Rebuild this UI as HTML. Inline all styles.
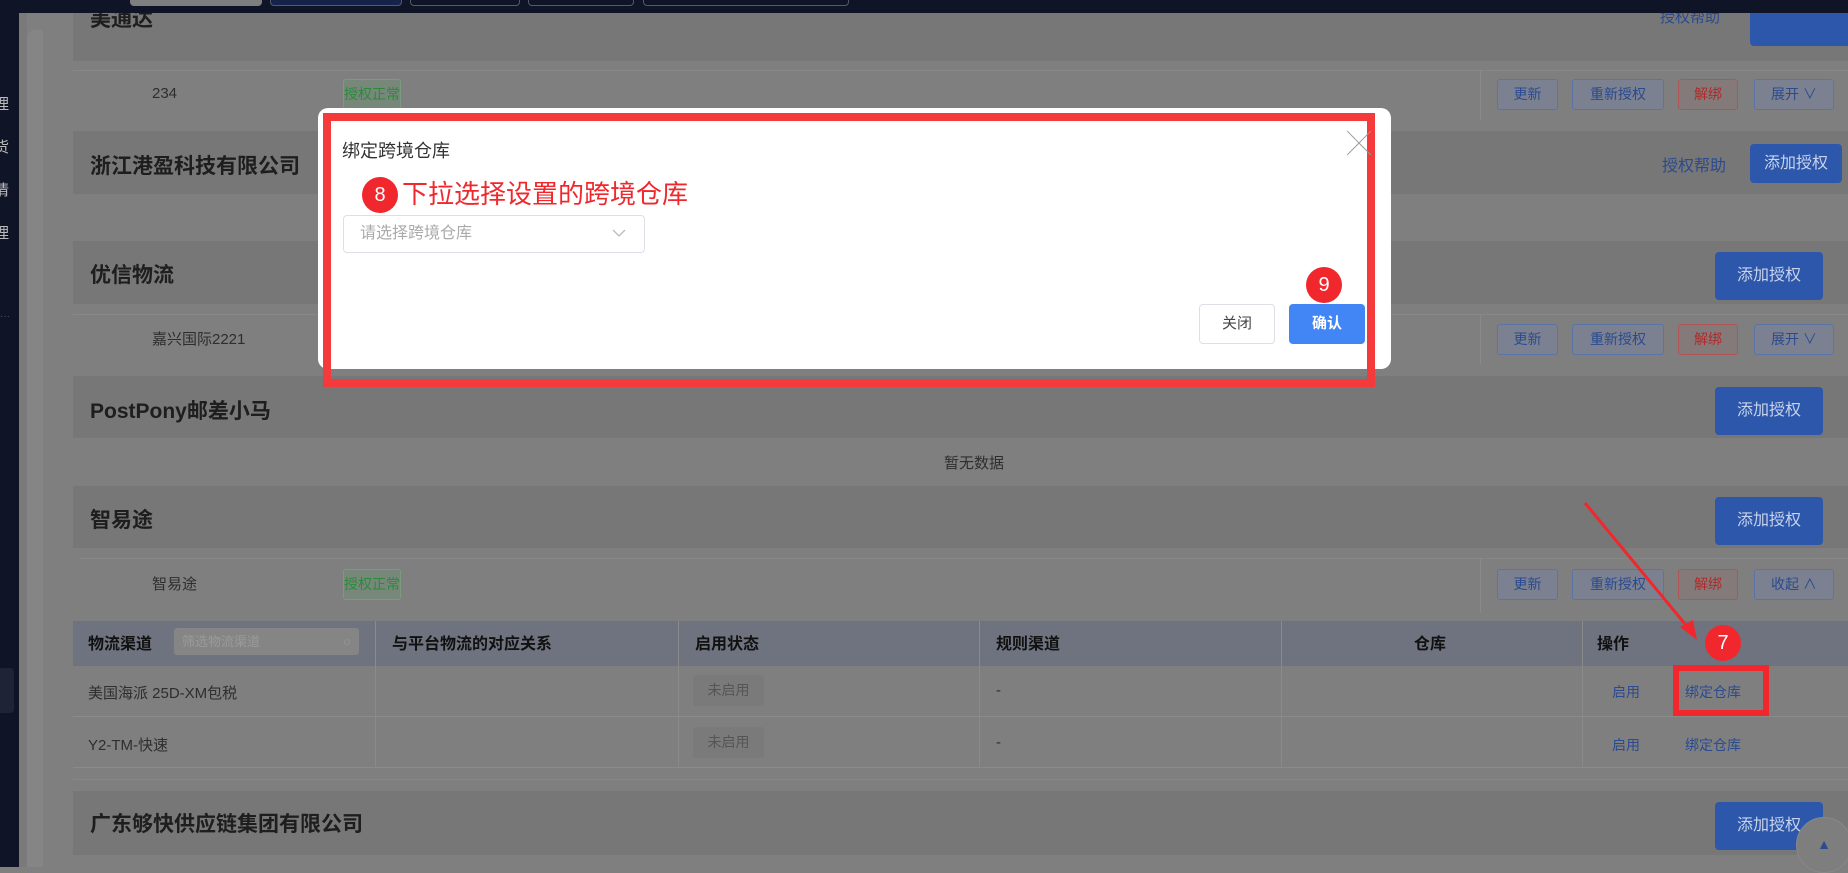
<!DOCTYPE html>
<html><head><meta charset="utf-8"><style>
*{margin:0;padding:0;box-sizing:border-box}
body{width:1848px;height:867px;overflow:hidden;background:#7f7f7f;font-family:"Liberation Sans","Noto Sans CJK SC",sans-serif;position:relative}
.a{position:absolute}
.hd{position:absolute;left:73px;width:1775px;background:#777}
.h{position:absolute;left:90px;font-size:21px;font-weight:bold;color:#1e1e1e}
.t{position:absolute;font-size:15px;color:#2e2e2e}
.ob{position:absolute;height:31px;border:1px solid #5a74a6;border-radius:3px;background:#7b8190;color:#2b4a8f;font-size:14px;text-align:center;line-height:29px}
.ob.r{border-color:#b05555;background:#857a7a;color:#b02a2a}
.bb{position:absolute;width:108px;height:48px;background:#2d57ab;border-radius:4px;color:#c8d3ec;font-size:16px;text-align:center;line-height:48px}
.tag{position:absolute;width:58px;height:31px;border:1px solid #7c9a80;background:#77887a;border-radius:3px;color:#2c8a3c;font-size:14px;text-align:center;line-height:29px}
.th{position:absolute;top:642px;font-size:16px;font-weight:bold;color:#111;transform:translateY(-50%)}
.vl{position:absolute;width:1px;background:#8a8a8a}
.circ{position:absolute;width:36px;height:36px;border-radius:50%;background:#f0282d;color:#fff;font-size:20px;text-align:center;line-height:36px}
</style></head><body>
<!-- sidebar -->
<div class="a" style="left:0;top:0;width:19px;height:867px;background:#0f1426"></div>
<div class="a" style="left:-6px;top:83px;color:#bbb;font-size:15px;line-height:43px">理<br>货<br>情<br>理</div>
<div class="a" style="left:0;top:311px;color:#555;font-size:10px">···</div>
<div class="a" style="left:0;top:668px;width:14px;height:45px;background:#1e2436;border-radius:0 4px 4px 0"></div>
<div class="a" style="left:19px;top:13px;width:8px;height:854px;background:#7a7a7a"></div>
<div class="a" style="left:27px;top:30px;width:16px;height:837px;background:#858585;border-radius:8px 0 0 0"></div>

<!-- sections -->
<div class="hd" style="top:13px;height:48px"></div>
<div class="h" style="top:3px">美通达</div>
<div class="a" style="left:1660px;top:6px;color:#2b4a8f;font-size:15px">授权帮助</div>
<div class="bb" style="left:1750px;top:0;height:46px"></div>
<div class="a" style="left:73px;top:70px;width:1775px;height:1px;background:#888"></div>
<div class="t" style="left:152px;top:85px">234</div>
<div class="tag" style="left:343px;top:79px">授权正常</div>
<div class="vl" style="left:1480px;top:70px;height:50px"></div>
<div class="ob" style="left:1497px;top:79px;width:61px">更新</div>
<div class="ob" style="left:1572px;top:79px;width:92px">重新授权</div>
<div class="ob r" style="left:1678px;top:79px;width:60px">解绑</div>
<div class="ob" style="left:1754px;top:79px;width:80px">展开 ∨</div>

<div class="hd" style="top:131px;height:63px"></div>
<div class="h" style="top:150px">浙江港盈科技有限公司</div>
<div class="a" style="left:1662px;top:152px;color:#2b4a8f;font-size:16px">授权帮助</div>
<div class="bb" style="left:1750px;top:144px;height:39px;line-height:39px;width:92px">添加授权</div>

<div class="hd" style="top:241px;height:63px"></div>
<div class="h" style="top:259px">优信物流</div>
<div class="bb" style="left:1715px;top:252px">添加授权</div>
<div class="a" style="left:73px;top:314px;width:1775px;height:1px;background:#888"></div>
<div class="t" style="left:152px;top:328px">嘉兴国际2221</div>
<div class="vl" style="left:1480px;top:314px;height:50px"></div>
<div class="ob" style="left:1497px;top:324px;width:61px">更新</div>
<div class="ob" style="left:1572px;top:324px;width:92px">重新授权</div>
<div class="ob r" style="left:1678px;top:324px;width:60px">解绑</div>
<div class="ob" style="left:1754px;top:324px;width:80px">展开 ∨</div>

<div class="hd" style="top:376px;height:62px"></div>
<div class="h" style="top:395px">PostPony邮差小马</div>
<div class="bb" style="left:1715px;top:387px">添加授权</div>
<div class="t" style="left:944px;top:452px">暂无数据</div>

<div class="hd" style="top:486px;height:62px"></div>
<div class="h" style="top:504px">智易途</div>
<div class="bb" style="left:1715px;top:497px">添加授权</div>
<div class="a" style="left:80px;top:558px;width:1768px;height:1px;background:#888"></div>
<div class="t" style="left:152px;top:573px">智易途</div>
<div class="tag" style="left:343px;top:569px">授权正常</div>
<div class="vl" style="left:1480px;top:558px;height:55px"></div>
<div class="ob" style="left:1497px;top:569px;width:61px">更新</div>
<div class="ob" style="left:1572px;top:569px;width:92px">重新授权</div>
<div class="ob r" style="left:1678px;top:569px;width:60px">解绑</div>
<div class="ob" style="left:1754px;top:569px;width:80px">收起 ∧</div>

<!-- table -->
<div class="a" style="left:73px;top:621px;width:1775px;height:45px;background:#6e737f"></div>
<div class="th" style="left:88px">物流渠道</div>
<div class="a" style="left:174px;top:628px;width:185px;height:27px;background:#858585;border-radius:3px;color:#9a9a9a;font-size:13px;line-height:27px;padding-left:8px">筛选物流渠道<span style="position:absolute;right:8px;color:#999">○</span></div>
<div class="th" style="left:392px">与平台物流的对应关系</div>
<div class="th" style="left:695px">启用状态</div>
<div class="th" style="left:996px">规则渠道</div>
<div class="th" style="left:1414px">仓库</div>
<div class="th" style="left:1597px">操作</div>
<div class="vl" style="left:375px;top:621px;height:147px"></div>
<div class="vl" style="left:678px;top:621px;height:147px"></div>
<div class="vl" style="left:979px;top:621px;height:147px"></div>
<div class="vl" style="left:1281px;top:621px;height:147px"></div>
<div class="vl" style="left:1582px;top:621px;height:147px"></div>
<div class="a" style="left:73px;top:716px;width:1775px;height:1px;background:#8a8a8a"></div>
<div class="a" style="left:73px;top:767px;width:1775px;height:1px;background:#8a8a8a"></div>
<div class="a" style="left:73px;top:779px;width:1775px;height:1px;background:#888"></div>
<div class="t" style="left:88px;top:682px">美国海派 25D-XM包税</div>
<div class="t" style="left:88px;top:734px">Y2-TM-快速</div>
<div class="a" style="left:693px;top:675px;width:71px;height:31px;background:#7a7a7a;border-radius:3px;color:#555;font-size:14px;text-align:center;line-height:31px">未启用</div>
<div class="a" style="left:693px;top:727px;width:71px;height:31px;background:#7a7a7a;border-radius:3px;color:#555;font-size:14px;text-align:center;line-height:31px">未启用</div>
<div class="t" style="left:996px;top:682px">-</div>
<div class="t" style="left:996px;top:734px">-</div>
<div class="a" style="left:1612px;top:682px;color:#2b4a8f;font-size:14px">启用</div>
<div class="a" style="left:1685px;top:682px;color:#2b4a8f;font-size:14px">绑定仓库</div>
<div class="a" style="left:1612px;top:735px;color:#2b4a8f;font-size:14px">启用</div>
<div class="a" style="left:1685px;top:735px;color:#2b4a8f;font-size:14px">绑定仓库</div>

<div class="hd" style="top:791px;height:64px"></div>
<div class="h" style="top:808px">广东够快供应链集团有限公司</div>
<div class="bb" style="left:1715px;top:802px">添加授权</div>
<div class="a" style="left:1796px;top:817px;width:56px;height:56px;border-radius:50%;background:#7e7e7e;border:1px solid #888;color:#2b4a8f;font-size:14px;text-align:center;line-height:52px">▲</div>

<!-- top bar -->
<div class="a" style="left:0;top:0;width:1848px;height:13px;background:#0f1426"></div>
<div class="a" style="left:130px;top:-4px;width:132px;height:10px;background:#7f7f7f;border-radius:4px"></div>
<div class="a" style="left:270px;top:-4px;width:132px;height:10px;border:1px solid #555a68;border-radius:4px;background:#15234a"></div>
<div class="a" style="left:410px;top:-4px;width:110px;height:10px;border:1px solid #555a68;border-radius:4px"></div>
<div class="a" style="left:528px;top:-4px;width:106px;height:10px;border:1px solid #555a68;border-radius:4px"></div>
<div class="a" style="left:643px;top:-4px;width:206px;height:10px;border:1px solid #555a68;border-radius:4px"></div>

<!-- annotations 7 -->
<svg class="a" style="left:0;top:0" width="1848" height="867"><line x1="1585" y1="503" x2="1690" y2="630" stroke="#f0282d" stroke-width="3"/><polygon points="1697,640 1680,627 1693,620" fill="#f0282d"/></svg>
<div class="circ" style="left:1705px;top:625px">7</div>
<div class="a" style="left:1673px;top:665px;width:96px;height:51px;border:6px solid #f0282d"></div>

<!-- modal -->
<div class="a" style="left:318px;top:108px;width:1073px;height:261px;background:#fff;border-radius:10px"></div>
<div class="a" style="left:323px;top:113px;width:1052px;height:274px;border:8px solid #f43a3a"></div>
<div class="a" style="left:342px;top:137px;font-size:18px;color:#333">绑定跨境仓库</div>
<div class="a" style="left:1347px;top:124px;font-size:24px;color:#999;font-weight:lighter">╳</div>
<div class="circ" style="left:362px;top:177px">8</div>
<div class="a" style="left:402px;top:178px;font-size:26px;color:#f0282d;line-height:32px">下拉选择设置的跨境仓库</div>
<div class="a" style="left:343px;top:215px;width:302px;height:38px;border:1px solid #dcdfe6;border-radius:4px;color:#aaa;font-size:16px;line-height:36px;padding-left:16px">请选择跨境仓库</div>
<svg class="a" style="left:612px;top:228px" width="14" height="10"><polyline points="1,2 7,8 13,2" fill="none" stroke="#bbb" stroke-width="1.3"/></svg>
<div class="a" style="left:1199px;top:304px;width:76px;height:40px;border:1px solid #dcdfe6;border-radius:4px;font-size:15px;color:#444;text-align:center;line-height:38px">关闭</div>
<div class="a" style="left:1289px;top:304px;width:76px;height:40px;background:#4285f4;border-radius:4px;font-size:15px;color:#fff;font-weight:bold;text-align:center;line-height:40px">确认</div>
<div class="circ" style="left:1306px;top:267px">9</div>
</body></html>
